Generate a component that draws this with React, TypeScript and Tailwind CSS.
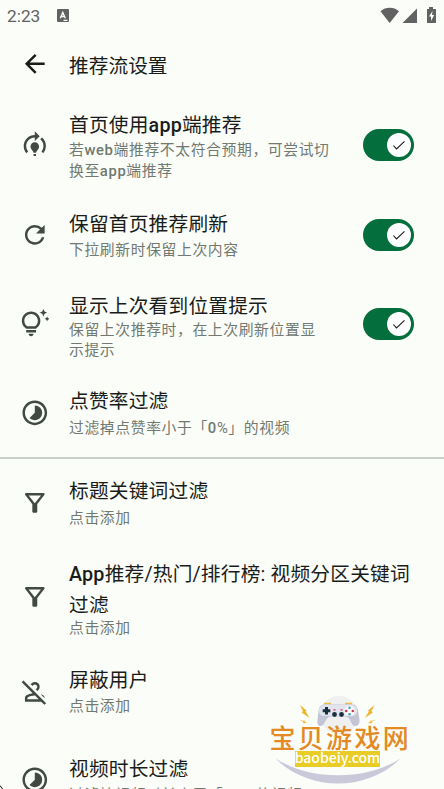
import { clsx } from "clsx";
import type { IconType } from "react-icons";
import {
  MdArrowBack,
  MdModelTraining,
  MdOutlineFilterAlt,
  MdOutlinePersonOff,
  MdOutlineTipsAndUpdates,
  MdRefresh,
  MdTimelapse,
} from "react-icons/md";

type Setting = {
  icon: IconType;
  title: string;
  subtitle: string;
  on?: boolean;
  row: string;
  text: string;
  subtitleClass?: string;
};

const feedSettings: Setting[] = [
  {
    icon: MdModelTraining,
    title: "首页使用app端推荐",
    subtitle: "若web端推荐不太符合预期，可尝试切换至app端推荐",
    on: true,
    row: "h-[92px]",
    text: "pt-3",
    subtitleClass: "-mt-[2px] leading-[21px]",
  },
  {
    icon: MdRefresh,
    title: "保留首页推荐刷新",
    subtitle: "下拉刷新时保留上次内容",
    on: true,
    row: "h-[88px]",
    text: "pt-[19px]",
    subtitleClass: "-mt-px leading-5",
  },
  {
    icon: MdOutlineTipsAndUpdates,
    title: "显示上次看到位置提示",
    subtitle: "保留上次推荐时，在上次刷新位置显示提示",
    on: true,
    row: "h-[89px]",
    text: "pt-[13px]",
    subtitleClass: "-mt-[3px] max-w-[250px] leading-5",
  },
  {
    icon: MdTimelapse,
    title: "点赞率过滤",
    subtitle: "过滤掉点赞率小于「0%」的视频",
    row: "h-[89px]",
    text: "pt-[19px]",
  },
];

const filterSettings: Setting[] = [
  {
    icon: MdOutlineFilterAlt,
    title: "标题关键词过滤",
    subtitle: "点击添加",
    row: "h-[88px]",
    text: "pt-[18px]",
  },
  {
    icon: MdOutlineFilterAlt,
    title: "App推荐/热门/排行榜: 视频分区关键词过滤",
    subtitle: "点击添加",
    row: "h-[100px]",
    text: "pt-[13px]",
    subtitleClass: "-mt-[3px] leading-5",
  },
  {
    icon: MdOutlinePersonOff,
    title: "屏蔽用户",
    subtitle: "点击添加",
    row: "h-[90px]",
    text: "pt-[19px]",
    subtitleClass: "-mt-px leading-5",
  },
  {
    icon: MdTimelapse,
    title: "视频时长过滤",
    subtitle: "过滤掉视频时长小于「0s」的视频",
    row: "h-[86px]",
    text: "pt-[18px]",
    subtitleClass: "-mt-px leading-5",
  },
];

// Latin letters and digits are medium, Chinese stays regular
function MixedText({ children }: { children: string }) {
  return children.split(/([A-Za-z0-9]+)/).map((part, index) =>
    index % 2 ? (
      <span key={index} className="font-medium">
        {part}
      </span>
    ) : (
      part
    ),
  );
}

function Switch() {
  return (
    <button
      role="switch"
      aria-checked="true"
      className="mr-[30px] ml-auto flex h-8 w-[51px] items-center justify-end rounded-full bg-[#056e3d] pr-[3.5px]"
    >
      <span className="flex size-6 items-center justify-center rounded-full bg-white">
        <svg viewBox="0 0 16 16" className="size-4" fill="none" stroke="#191c1a" strokeWidth="1.1">
          <path d="M2.4 8.5 5.5 11.9 13.5 4.3" />
        </svg>
      </span>
    </button>
  );
}

function SettingRow({ setting }: { setting: Setting }) {
  const Icon = setting.icon;
  return (
    <div className={clsx("flex shrink-0 items-center", setting.row)}>
      <div className="w-[69px] shrink-0 pl-[19.5px] text-[#404943]">
        <Icon size={29.6} />
      </div>
      <div className={clsx("self-start", setting.on ? "w-[265px]" : "w-[350px]", setting.text)}>
        <h2 className="text-[19.73px] leading-[30.5px] tracking-[0.18px] text-[#191c1a]">
          <MixedText>{setting.title}</MixedText>
        </h2>
        <p
          className={clsx(
            "text-[14.8px] tracking-[0.63px] text-[#717971]",
            setting.subtitleClass ?? "leading-5",
          )}
        >
          <MixedText>{setting.subtitle}</MixedText>
        </p>
      </div>
      {setting.on && <Switch />}
    </div>
  );
}

function StatusBar() {
  return (
    <div className="flex h-8 shrink-0 items-center pl-[7px] text-[#626262]">
      <span className="-mt-px text-[17.3px] leading-8">2:23</span>
      <svg viewBox="0 0 12 13" className="-mt-[2px] ml-[17px] h-[13px] w-3">
        <rect width="12" height="13" rx="1" fill="currentColor" />
        <path d="M3.3 9.3 5.8 3.5 8.3 9.3M4.3 7.5h3M6.5 11.3h4" stroke="#fff" strokeWidth="1.3" fill="none" />
      </svg>
      <svg viewBox="0 0 58 18" className="-mt-[3px] mr-[6px] ml-auto h-[18px] w-[58px]" fill="currentColor">
        <path d="M.5 5.2a14 14 0 0 1 18.5 0L9.7 17Z" />
        <path d="M22.5 17 37 2.5V17Z" />
        <path d="M47 3h2V1h4v2h3v14h-9Z" />
        <path d="m52.5 5-3.500 5.500h2V15l3.200-6h-2.200Z" fill="#fff" />
      </svg>
    </div>
  );
}

function Watermark() {
  return (
    <div className="pointer-events-none absolute top-[694px] left-[268px] h-[92px] w-[144px]">
      <svg viewBox="0 0 144 92" className="absolute inset-0 h-[92px] w-[144px]">
        <circle cx="71" cy="21" r="19" fill="#f0f0f0" />
        <path d="M7 64c33 23 93 23 126 0-33 34-93 34-126 0Z" fill="#c9c9da" />
        {/* gamepad */}
        <path d="M56 9.5h7M77 9.5h7" stroke="#e9bd4c" strokeWidth="1.6" />
        <path
          d="M56 10.5h28c4 0 5.500 3 6 6l1.500 9c.5 4-1.500 6.500-4 6.500-3 0-4-3-5.500-6-1.500-2.500-3-3.500-5.500-3.500H64c-3 0-4.500 1-6 3.500-1.500 3-3 6-5.500 6s-3.500-2.500-3-6l1-9c.5-3.500 2-6.500 5.500-6.500Z"
          fill="#c3c4d4"
        />
        <path d="M57 11h26c4 0 6 2.500 6 6s-2.500 5-5 5H57c-4 0-6-2-6-5s2-6 6-6Z" fill="#e4e4ee" />
        <path d="M58.5 13v7.500M54.700 16.800h7.600" stroke="#17313f" strokeWidth="3" />
        <circle cx="66.5" cy="20.5" r="2.4" fill="#17313f" />
        <circle cx="73.5" cy="20.5" r="2.4" fill="#17313f" />
        <path d="M65.5 15.8h2M72.500 15.800h2" stroke="#d6314d" strokeWidth="1.2" />
        <circle cx="81.5" cy="17" r="5" fill="#fff" />
        <circle cx="81.5" cy="13.7" r="1.3" fill="#37a4b7" />
        <circle cx="81.5" cy="20.3" r="1.3" fill="#37a4b7" />
        <circle cx="78.2" cy="17" r="1.3" fill="#d6314d" />
        <circle cx="84.8" cy="17" r="1.3" fill="#d6314d" />
        {/* sparks */}
        <g fill="#edb52f">
          <path d="m32 11 6.500 5.500-.8 1 4 6.500-8-5.500 1.200-1.500Z" />
          <path d="m31 25.500 4 1.300h2.500l-1 1.200 3.500 1-5 .2.500-1.200Z" />
          <path d="m106.500 11-6.500 5.500.8 1-4 6.500 8-5.500-1.200-1.500Z" />
          <path d="m108 25.500-4 1.300h-2.500l1 1.200-3.500 1 5 .2-.5-1.200Z" />
        </g>
      </svg>
      <div className="relative flex flex-col items-start pt-[28px]">
        <span className="pl-[1.5px] font-['Noto_Sans_CJK_SC',sans-serif] text-[26px] leading-[29px] font-medium tracking-[2.3px] whitespace-nowrap text-[#e38a25]">
          宝贝游戏网
        </span>
        <span className="ml-[27px] flex h-4 w-[85px] items-center justify-center bg-[#e9cc25] pb-[3px] font-['Noto_Sans_CJK_SC',sans-serif] text-[14px] leading-[13px] font-medium text-white">
          baobeiy.com
        </span>
      </div>
    </div>
  );
}

export default function App() {
  return (
    <div className="relative flex h-[789px] w-[444px] flex-col overflow-hidden bg-[#fbfdf8] font-[Roboto,'Noto_Sans_CJK_SC',sans-serif]">
      <StatusBar />
      <header className="flex h-[67px] shrink-0 items-center pl-[19.5px] text-[#191c1a]">
        <MdArrowBack size={29.6} className="-mt-[3px]" />
        <h1 className="mt-[3px] ml-[19.9px] text-[19.73px]">推荐流设置</h1>
      </header>
      {feedSettings.map((setting) => (
        <SettingRow key={setting.title} setting={setting} />
      ))}
      <hr className="h-0.5 shrink-0 border-0 bg-[#c9cfc9]" />
      {filterSettings.map((setting) => (
        <SettingRow key={setting.title} setting={setting} />
      ))}
      <Watermark />
      {/* rounded screen corner */}
      <svg viewBox="0 0 3 4" className="absolute bottom-0 left-0 h-1 w-[3px]">
        <path d="M0 .5 2.5 4" stroke="#111" strokeWidth="1" />
      </svg>
    </div>
  );
}
